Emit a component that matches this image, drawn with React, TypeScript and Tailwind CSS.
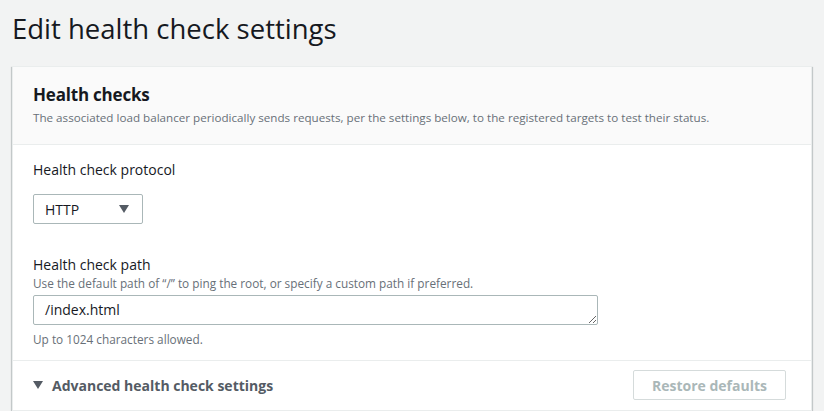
import { ChangeEvent, useState } from "react";

const font = { fontFamily: '"Open Sans", "Noto Sans", Arial, sans-serif' };

export default function App() {
  const [path, setPath] = useState("/index.html");

  return (
    <div
      className="min-h-screen w-full bg-[#f2f3f3] text-[#16191f] overflow-hidden"
      style={font}
    >
      <h1 className="pl-[12px] pt-[9px] text-[27.5px] leading-[40px] font-normal text-[#16191f]">
        Edit health check settings
      </h1>

      <div className="ml-[12px] mt-[17px] w-[800px] bg-white border border-[#eaeded] shadow-[0_1px_1px_0_rgba(0,28,36,0.3),1px_1px_1px_0_rgba(0,28,36,0.15),-1px_1px_1px_0_rgba(0,28,36,0.15)]">
        {/* header */}
        <div className="bg-[#fafafa] border-b border-[#eaeded] px-[20px] pt-[16px] pb-[18px]">
          <h2 className="text-[17px] leading-[24px] font-bold tracking-[-0.2px] text-[#16191f]">
            Health checks
          </h2>
          <p className="text-[11.65px] leading-[16px] text-[#687078] mt-[3px]">
            The associated load balancer periodically sends requests, per the
            settings below, to the registered targets to test their status.
          </p>
        </div>

        {/* body */}
        <div className="px-[20px] pt-[15px] pb-[13px]">
          <label className="block text-[14px] leading-[20px]">
            Health check protocol
          </label>
          <div className="mt-[14px] w-[110px] h-[30px] border border-[#aab7b8] rounded-[2px] bg-white flex items-center justify-between pl-[11px] pr-[13px]">
            <span className="text-[14px]">HTTP</span>
            <svg width="10" height="8" viewBox="0 0 10 8">
              <path d="M0 0h10L5 8z" fill="#545b64" />
            </svg>
          </div>

          <label className="block mt-[31px] text-[14px] leading-[20px]">
            Health check path
          </label>
          <p className="text-[11.8px] leading-[16px] text-[#687078]">
            Use the default path of “/” to ping the root, or specify a custom
            path if preferred.
          </p>
          <textarea
            value={path}
            onChange={(e: ChangeEvent<HTMLTextAreaElement>) =>
              setPath(e.target.value)
            }
            rows={1}
            className="mt-[4px] block w-[565px] h-[30px] border border-[#aab7b8] rounded-[2px] bg-white px-[11px] py-[4px] text-[14px] leading-[20px] text-[#16191f] outline-none resize"
          />
          <p className="mt-[6px] text-[11.8px] leading-[16px] text-[#687078]">
            Up to 1024 characters allowed.
          </p>
        </div>

        {/* advanced */}
        <div className="border-t border-[#eaeded] px-[20px] pt-[9px] pb-[10px] flex items-center justify-between">
          <button
            type="button"
            className="flex items-center gap-[9px] text-[14px] font-bold text-[#545b64]"
          >
            <svg width="10" height="8" viewBox="0 0 10 8">
              <path d="M0 0h10L5 8z" fill="#545b64" />
            </svg>
            Advanced health check settings
          </button>
          <button
            type="button"
            disabled
            className="mr-[5px] w-[153px] h-[30px] border border-[#d5dbdb] rounded-[2px] bg-white text-[14px] font-bold text-[#aab7b8]"
          >
            Restore defaults
          </button>
        </div>
      </div>
    </div>
  );
}
